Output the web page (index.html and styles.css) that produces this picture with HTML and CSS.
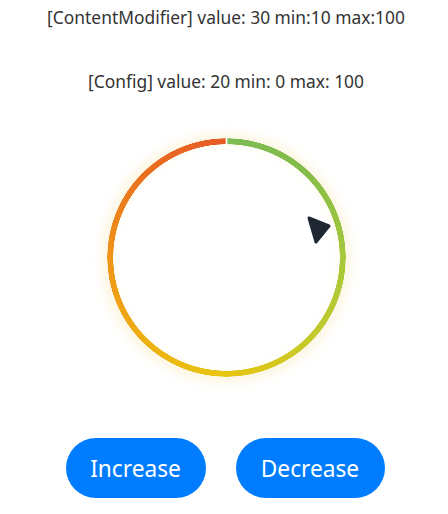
FILE: index.html
```html
<!DOCTYPE html>
<html>
<head>
<meta charset="utf-8">
<link rel="stylesheet" href="styles.css">
</head>
<body>
<div class="page">
  <div class="label label-top">[ContentModifier] value: 30 min:10 max:100</div>
  <div class="label label-config">[Config] value: 20 min: 0 max: 100</div>
  <div class="knob">
    <div class="glow"></div>
    <div class="ring"></div>
    <svg class="pointer" width="250" height="250" viewBox="0 0 250 250">
      <polygon points="208,85 228,93 215,109" fill="#1f2733" stroke="#1f2733" stroke-width="3" stroke-linejoin="round"/>
    </svg>
  </div>
  <div class="buttons">
    <button class="btn btn-inc">Increase</button>
    <button class="btn btn-dec">Decrease</button>
  </div>
</div>
</body>
</html>
```
FILE: styles.css
```css
html, body {
  margin: 0;
  padding: 0;
  background: #ffffff;
}
.page {
  width: 448px;
  height: 514px;
  display: flex;
  flex-direction: column;
  align-items: center;
  font-family: "Noto Sans", Roboto, sans-serif;
}
.label {
  font-size: 17.4px;
  line-height: 22px;
  color: #333333;
  white-space: nowrap;
}
.label-top {
  margin-top: 6px;
  margin-left: 4px;
}
.label-config {
  margin-top: 42px;
  margin-left: 4px;
}
.knob {
  position: relative;
  width: 250px;
  height: 250px;
  margin-top: 41px;
  margin-left: 3px;
}
.glow {
  position: absolute;
  left: 5px;
  top: 5px;
  width: 240px;
  height: 240px;
  border-radius: 50%;
  box-shadow: 0 0 12px 4px rgba(240, 200, 80, 0.2), inset 0 0 12px 4px rgba(240, 200, 80, 0.16);
}
.ring {
  position: absolute;
  left: 6px;
  top: 5px;
  width: 239px;
  height: 239px;
  border-radius: 50%;
  background: conic-gradient(from 0deg,
    #ffffff 0deg, #ffffff 0.3deg,
    #7cbb55 0.6deg,
    #86bd48 45deg,
    #a9c93a 95deg,
    #c8c928 140deg,
    #e8c610 180deg,
    #edb012 225deg,
    #ef9418 270deg,
    #ea7020 315deg,
    #e65a26 359.4deg,
    #ffffff 359.7deg);
  -webkit-mask: radial-gradient(circle, transparent 113px, #000 113.5px, #000 119px, transparent 119.5px);
  mask: radial-gradient(circle, transparent 113px, #000 113.5px, #000 119px, transparent 119.5px);
}
.pointer {
  position: absolute;
  left: 0;
  top: 0;
}
.buttons {
  display: flex;
  gap: 30px;
  margin-top: 55px;
  margin-left: 2px;
}
.btn {
  height: 60px;
  border: none;
  border-radius: 30px;
  background: #007dff;
  color: #ffffff;
  font-family: "Noto Sans", Roboto, sans-serif;
  font-size: 22.7px;
  padding: 0;
}
.btn-inc {
  width: 140px;
}
.btn-dec {
  width: 149px;
}
```
